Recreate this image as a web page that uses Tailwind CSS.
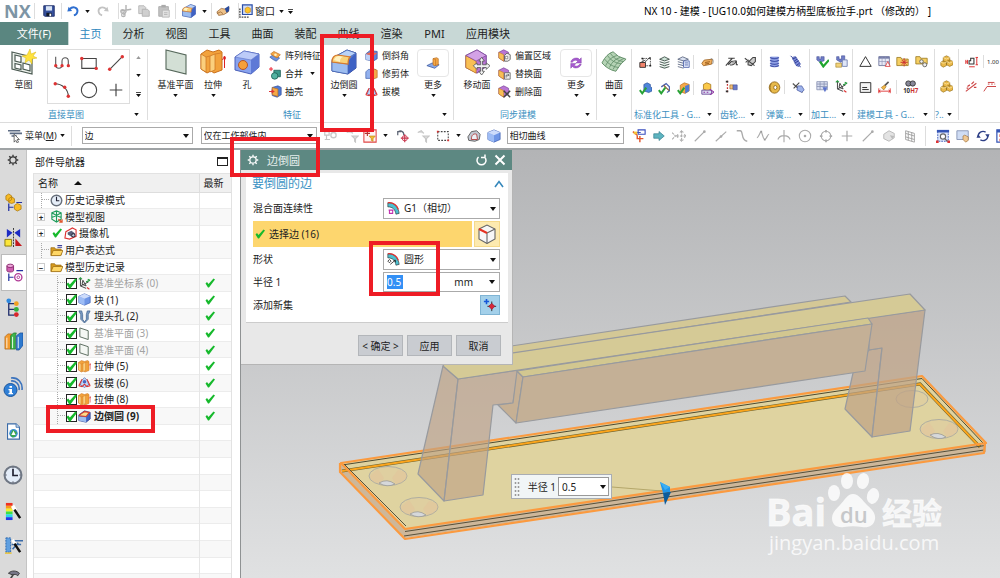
<!DOCTYPE html>
<html lang="zh-CN">

<head>
  <meta charset="UTF-8" />
  <meta name="viewport" content="width=device-width, initial-scale=1" />
  <title>NX 10 - 建模</title>
  <script src="https://cdn.jsdelivr.net/npm/@tailwindcss/browser@4"></script>
</head>

<body class="relative flex h-screen flex-col overflow-hidden bg-white font-['Noto_Sans','Noto_Sans_CJK_SC',sans-serif] text-[10px] leading-none text-[#222]">

  <!-- icon set -->
  <svg class="hidden" xmlns="http://www.w3.org/2000/svg">
    <symbol id="down" viewBox="0 0 6 4"><path d="M0 0h6L3 4z" fill="#111" /></symbol>
    <symbol id="up" viewBox="0 0 6 4"><path d="M0 4h6L3 0z" fill="#999" /></symbol>
    <symbol id="downbar" viewBox="0 0 6 6"><path d="M0 0h6v1H0zM0 2.500h6L3 6z" fill="#111" /></symbol>
    <symbol id="save" viewBox="0 0 16 16"><path d="M2 2h12v12H3l-1-1z" fill="#35509c" stroke="#1c2c66" /><path d="M4.500 2.500h7v5h-7z" fill="#d9e4f5" /><path d="M5 10h6v4H5z" fill="#111827" /><path d="M8.500 11h2v3h-2z" fill="#fff" /></symbol>
    <symbol id="undo" viewBox="0 0 16 16"><path d="M1.500 8.500 3 3l4 5z" fill="#2f6fd0" /><path d="M4 6c4-4 10-2 9 3-.4 2-2 3.500-4 4" fill="none" stroke="#2f6fd0" stroke-width="2.200" /></symbol>
    <symbol id="redo" viewBox="0 0 16 16"><path d="M14.500 8.500 13 3 9 8z" fill="#c3c3c3" /><path d="M12 6C8 2 2 4 3 9c.4 2 2 3.500 4 4" fill="none" stroke="#c3c3c3" stroke-width="2" /></symbol>
    <symbol id="cut" viewBox="0 0 16 16"><path d="M8 1v8M2 8l12-2M8 9l-3 4" fill="none" stroke="#b3b3b3" stroke-width="1.600" /><circle cx="5" cy="12.500" r="2" fill="none" stroke="#b3b3b3" stroke-width="1.400" /><circle cx="4" cy="8.500" r="2" fill="none" stroke="#b3b3b3" stroke-width="1.400" /></symbol>
    <symbol id="copy" viewBox="0 0 16 16"><path d="M2 2h6l2 2v7H2z" fill="#d8d8d8" stroke="#b5b5b5" /><path d="M6 6h6l2 2v6H6z" fill="#cfcfcf" stroke="#b0b0b0" /></symbol>
    <symbol id="paste" viewBox="0 0 16 16"><path d="M2 3h11v11H2z" fill="#c2c2c2" stroke="#aaa" /><path d="M5 1h5v3H5z" fill="#aaa" /><path d="M6 7h8v8H6z" fill="#e2e2e2" stroke="#b5b5b5" /><path d="M8 10h4M8 12h4" stroke="#b5b5b5" /></symbol>
    <symbol id="round" viewBox="0 0 26 26"><path d="M1 13c0-5 3-6 6-7l9-5 9 3v15l-8 6-16-3z" fill="#5b7fd4" stroke="#33489a" stroke-linejoin="round" /><path d="M17 12l8-8v15l-8 6z" fill="#3f62c4" /><path d="M1 13l16 2v10L1 22z" fill="#9dbdf0" stroke="#4465b5" stroke-width=".7" /><path d="M7 6l9-5 9 3-8 5z" fill="#b9d2f8" stroke="#4465b5" stroke-width=".7" /><path d="M1 13c0-5 3-7 6-7l12 2c-2 2-2 4-2 7z" fill="#f9d27a" stroke="#d97a2b" stroke-width="1.200" /><path d="M3 11c1-3 3-4 5-4l5 1c-3 0-4 2-4 5z" fill="#fff2c2" /></symbol>
    <symbol id="t-round" viewBox="0 0 16 16"><path d="M1 6l7-5 7 2v8l-5 4-9-2z" fill="#3f62c4" stroke="#2a3c8c" stroke-width=".9" /><path d="M1 8l9 1v6l-9-2z" fill="#9dbdf0" /><path d="M2 6l6-4 6 1-4 5-8-1z" fill="#fbdc8c" stroke="#dd3a24" stroke-width="1.300" /></symbol>
    <symbol id="hand" viewBox="0 0 16 12"><path d="M1 7l5-4 5 1 4-2-1 5-5 3-6 1z" fill="#efc38b" stroke="#8c5a2a" stroke-width=".8" /><path d="M10 3l5-3v6l-3 2z" fill="#2c4d9c" /><path d="M1 9l4-2 3 2" fill="none" stroke="#8c5a2a" stroke-width=".8" /></symbol>
    <symbol id="window" viewBox="0 0 16 16"><path d="M1 5v10h10" fill="none" stroke="#444" stroke-dasharray="2 1" stroke-width="1.500" /><path d="M4 1h11v11H4z" fill="#cfdcf7" stroke="#2b4fa8" stroke-width="1.400" /><path d="M7 5l3-1.500L13 5v4l-3 1.500L7 9z" fill="#ffc528" stroke="#c98512" stroke-width=".7" /></symbol>

    <symbol id="sketch" viewBox="0 0 26 26"><path d="M1 3l20 5v17L1 20z" fill="#eef3ee" stroke="#4b5a52" stroke-width="1.200" /><path d="M4 6l6 1.500v6L4 12zM4 14.500l6 1.500v4.500L4 19zM12 14l7 2v6l-7-2z" fill="#fff" stroke="#4b5a52" stroke-width="1.200" /><path d="M19 0l1 5 5-2-3 4 4 2-5 1 0 5-3-4-4 3 1-5-4-2 5-1z" fill="#ffe23d" stroke="#d7b414" stroke-width=".5" /></symbol>
    <symbol id="profile" viewBox="0 0 20 20"><path d="M3 3v9c0 5 7 5 7 0V8c0-5 7-5 7 0v5" fill="none" stroke="#555" stroke-width="1.200" /><path d="M3 13h.1M10 13h.1M17 13h.1" stroke="#d33" stroke-width="3.600" stroke-linecap="round" /></symbol>
    <symbol id="rect" viewBox="0 0 20 20"><path d="M2 5h16v11H2z" fill="none" stroke="#444" stroke-width="1.200" /><circle cx="2" cy="5" r="1.900" fill="#d33" /><circle cx="18" cy="16" r="1.900" fill="#d33" /></symbol>
    <symbol id="line" viewBox="0 0 20 20"><path d="M3 17L17 3" stroke="#444" stroke-width="1.200" /><circle cx="3" cy="17" r="1.900" fill="#d33" /><circle cx="17" cy="3" r="1.900" fill="#d33" /></symbol>
    <symbol id="arc" viewBox="0 0 20 20"><path d="M2 3c8 0 15 6 15 14" fill="none" stroke="#444" stroke-width="1.200" /><circle cx="2.500" cy="3" r="1.900" fill="#d33" /><circle cx="13" cy="7" r="1.900" fill="#d33" /><circle cx="17" cy="17" r="1.900" fill="#d33" /></symbol>
    <symbol id="circle" viewBox="0 0 20 20"><circle cx="10" cy="10" r="8.500" fill="none" stroke="#444" stroke-width="1.200" /></symbol>
    <symbol id="plus" viewBox="0 0 20 20"><path d="M10 3v14M3 10h14" stroke="#444" stroke-width="1.300" /></symbol>

    <symbol id="plane" viewBox="0 0 26 26"><path d="M3 1l20 5v19L3 20z" fill="#d3dfd5" stroke="#55675a" stroke-width="1.100" /></symbol>
    <symbol id="extrude" viewBox="0 0 26 26"><path d="M1 5l6-4 6 2 6-2 3 2v18l-8 3-3-2-4 2-6-4z" fill="#f2a23c" stroke="#c9701c" /><path d="M1 5l5 3v15l-5-3zM10 7l5-2v16l-5 2z" fill="#fbcf7d" stroke="#c9701c" stroke-width=".7" /><path d="M6 8l4-1M15 5l6-1" stroke="#d9822b" /><path d="M24.500 19V8M22.500 11l2-4 2 4" fill="none" stroke="#d22" /></symbol>
    <symbol id="hole" viewBox="0 0 26 26"><path d="M1 8l9-6 15 3v13l-8 7-16-4z" fill="#89a3ee" stroke="#4a5fb8" /><path d="M17 11l8-6v13l-8 7z" fill="#5e79d6" /><path d="M1 8l9-6 15 3-8 6z" fill="#bccbf8" stroke="#5a70c4" stroke-width=".6" /><circle cx="9" cy="16" r="4.500" fill="#f6a03a" stroke="#b3562a" /></symbol>
    <symbol id="pattern" viewBox="0 0 16 16"><path d="M1 10l4-3 4 2 4 2-4 4-4-2z" fill="#6d93de" stroke="#31509c" stroke-width=".8" /><path d="M2 6l4-3 4 2 4 2-4 4-4-2z" fill="#f5a847" stroke="#b86b1c" stroke-width=".8" /><circle cx="8" cy="7" r="1.600" fill="#fff2c2" /></symbol>
    <symbol id="unite" viewBox="0 0 16 16"><path d="M6 4h8v8H6z" fill="#3e9a8c" stroke="#1f5f55" /><circle cx="7" cy="11" r="4" fill="#55b3a2" stroke="#1f5f55" /><path d="M2.500 0v5M0 2.500h5" stroke="#e23" stroke-width="1.200" /></symbol>
    <symbol id="shell" viewBox="0 0 16 16"><path d="M4 3l7-2 4 2v9l-5 3-6-2z" fill="#4f7ad3" stroke="#2d4a99" stroke-width=".8" /><path d="M4 3l7 2v9l-7-2z" fill="#f5a847" stroke="#b86b1c" stroke-width=".8" /><path d="M0 8h5M3 6l3 2-3 2" fill="none" stroke="#d33" stroke-width="1.300" /></symbol>
    <symbol id="chamfer" viewBox="0 0 16 16"><path d="M1 6l5-4 9 1v9l-5 3-9-2z" fill="#5f86dd" stroke="#2d4a99" stroke-width=".8" /><path d="M1 6l9 2v7l-9-2z" fill="#bcd0f6" /><path d="M1 6l5-2 9 1-5 4z" fill="#e96a55" /></symbol>
    <symbol id="trim" viewBox="0 0 16 16"><path d="M1 6l3-3h9l-2 3v8H1z" fill="#93b1ee" stroke="#3858a8" stroke-width=".8" /><path d="M10 2l5 2v9l-5 2z" fill="#f5a847" stroke="#b86b1c" stroke-width=".8" /></symbol>
    <symbol id="draft" viewBox="0 0 16 16"><path d="M4 6l4-4 4 4 1 5-5 3-5-3z" fill="#c5d7f8" stroke="#3858a8" stroke-width=".8" /><path d="M1 12l4-8M15 12l-4-8M1 12l4 1 3-3 3 3 4-1" fill="none" stroke="#d33" stroke-width="1.300" /><circle cx="8" cy="7" r="2.200" fill="#4668c0" /></symbol>
    <symbol id="moreblock" viewBox="0 0 16 16"><path d="M1 11l6-3 8 2-5 4z" fill="#8aa9e6" stroke="#31509c" stroke-width=".8" /><path d="M8 3l4-1 2 1v7l-4 1-2-1z" fill="#f5a847" stroke="#b86b1c" stroke-width=".8" /><path d="M8 3l3 1v7" fill="none" stroke="#b86b1c" stroke-width=".7" /></symbol>
    <symbol id="moveface" viewBox="0 0 28 28"><path d="M2 7l12-6 10 6v12l-10 7-12-6z" fill="#b975d4" stroke="#744195" /><path d="M2 7l11 6v13L2 20z" fill="#f8bf55" stroke="#c47a1c" stroke-width=".8" /><path d="M2 7l12-6 10 6-11 6z" fill="#d3a2e6" stroke="#744195" stroke-width=".7" /><path d="M19 9l3 4h-2v4h4v-2l4 3-4 4v-2h-4v4h2l-3 4-3-4h2v-4h-4v2l-4-4 4-3v2h4v-4h-2z" fill="#f2f2f2" stroke="#555" stroke-width=".9" /></symbol>
    <symbol id="face" viewBox="0 0 16 16"><path d="M1 4l6-3 6 3v7l-6 4-6-4z" fill="#b975d4" stroke="#744195" stroke-width=".8" /><path d="M1 4l6 3v8l-6-4z" fill="#f8bf55" stroke="#c47a1c" stroke-width=".7" /></symbol>
    <symbol id="offset" viewBox="0 0 16 16"><use href="#face" /><path d="M8 8l3-3 4 2v6l-3 2H8z" fill="#eee" stroke="#555" /><path d="M9 9h3v3H9z" fill="#fff" stroke="#555" stroke-width=".7" /></symbol>
    <symbol id="replace" viewBox="0 0 16 16"><use href="#face" /><path d="M8 7h7v8H8z" fill="#eee" stroke="#666" /><path d="M10 13v-3h3M12 8.500l1.500 1.500-1.500 1.500" fill="none" stroke="#555" /></symbol>
    <symbol id="delface" viewBox="0 0 16 16"><use href="#face" /><path d="M7 7l8 8M15 7l-8 8" stroke="#444" stroke-width="1.800" /></symbol>
    <symbol id="sync" viewBox="0 0 16 16"><path d="M2 7c1-5 8-6 10-3l2-2v6H8l2-2c-2-2-5-1-6 1zM14 9c-1 5-8 6-10 3l-2 2V8.500h6L6 10.500c2 2 5 1 6-1z" fill="#a85bd0" stroke="#7b3ba3" stroke-width=".5" /></symbol>
    <symbol id="surface" viewBox="0 0 28 26"><path d="M1 14Q6 4 13 2q5 6 14 8-6 4-11 13Q7 21 1 14z" fill="#b5d3b5" stroke="#5f8d66" /><path d="M4 10q6 8 15 9M7 6q5 8 15 9M10 3.500q5 8 14 9M5 17Q9 8 17 6M9 19q4-9 12-11M13 21q4-9 12-12" fill="none" stroke="#5a8862" stroke-width=".8" /></symbol>

    <symbol id="g1" viewBox="0 0 16 16"><path d="M5 3h9v9H5z" fill="none" stroke="#333" stroke-dasharray="2 1" /><path d="M2 8l6-3M3 12l9-9" stroke="#333" /><path d="M12.500 1.500h2v2h-2zM3 2h2v2H3zM13 11h2v2h-2z" fill="#222" /><path d="M1 8h7v6H1z" fill="#f2836b" stroke="#222" /></symbol>
    <symbol id="g2" viewBox="0 0 16 16"><path d="M2 4l6-3 6 3-6 2zM2 7l6 2 6-2M2 10l6 2 6-2M2 13l6 2 6-2" fill="#cfe4d8" stroke="#3f4f48" stroke-width="1.100" /></symbol>
    <symbol id="g3" viewBox="0 0 16 16"><path d="M1 4l6-3 7 3-6 2zM1 7l7 2 6-2M1 10l7 2 6-2M1 13l7 2" fill="#dbe2f2" stroke="#55607a" /><path d="M8 6h7v8H8z" fill="#e6ecfb" stroke="#4a5fa8" /><path d="M9.500 8.500h4M9.500 11h4" stroke="#4a5fa8" /></symbol>
    <symbol id="g4" viewBox="0 0 16 16"><path d="M1 9l3-4 10-1-1 6-10 2z" fill="#f0b060" stroke="#9a6020" /><path d="M5 8l6-1M5 10l5-1" stroke="#8a4d10" /><path d="M12 3c3 0 4 4 2 7" fill="none" stroke="#888" /></symbol>
    <symbol id="bluecheck" viewBox="0 0 16 16"><path d="M6 3l4-2 4 2v3l2 1v4l-4 2-6-2z" fill="#4f86da" stroke="#264b98" stroke-width=".8" /><path d="M1 10l3 4 5-7" fill="none" stroke="#28a235" stroke-width="2.400" /></symbol>
    <symbol id="edgecheck" viewBox="0 0 16 16"><path d="M4 6l6-4 4 4v5l-3 2" fill="none" stroke="#4d62b0" stroke-width="1.500" /><path d="M8 5l6 6M7 4l3 3" stroke="#8a6030" stroke-width="1.500" /><path d="M1 10l3 4 5-7" fill="none" stroke="#28a235" stroke-width="2.400" /></symbol>
    <symbol id="blockcheck" viewBox="0 0 16 16"><path d="M4 4l5-3 6 2v8l-5 3-6-2z" fill="#f5a847" stroke="#b86b1c" stroke-width=".8" /><path d="M10 5l5-2v8l-5 3z" fill="#4f7ad3" /><path d="M1 10l3 4 5-7" fill="none" stroke="#28a235" stroke-width="2.400" /></symbol>
    <symbol id="g8" viewBox="0 0 16 16"><path d="M3 3l4-2 5 2v6l-4 2-5-2z" fill="#fbc94a" stroke="#a9791a" /><path d="M1 10h12v5H1z" fill="#dcdcf2" stroke="#5f3f8f" /><path d="M3 12.500h2M7 12.500h2M11 9l5 3.500-5 3" stroke="#8c2fa0" fill="none" stroke-width="1.300" /></symbol>
    <symbol id="gear1" viewBox="0 0 16 14"><path d="M4 3h8M1 12L9 3M4 11l4-4 6-1M6 11c3 1 6-1 8-5v5h2" fill="none" stroke="#444" stroke-width="1.400" /><path d="M7 9l3-2 3 0-2 3z" fill="#aaa" /></symbol>
    <symbol id="gear2" viewBox="0 0 16 14"><path d="M1 3l12 9M5 8l6-6h3v5l-5 5-4-1zM2 8l4-3" fill="#ccc" stroke="#444" stroke-width="1.300" /></symbol>
    <symbol id="gear3" viewBox="0 0 16 16"><path d="M3 1v14" stroke="#c33" stroke-dasharray="2 2" stroke-width="1.500" /><path d="M6 6h4v5H6z" fill="#f1c27a" stroke="#9a6020" stroke-width=".7" /><path d="M10 6h5v6h-5z" fill="#6c7bc9" stroke="#3a4a99" stroke-width=".7" /><path d="M1 1h3v2H1zM1 13h3v2H1z" fill="#333" /></symbol>
    <symbol id="spring1" viewBox="0 0 16 16"><path d="M3 2h10v12H3z" fill="#8fa0e4" /><path d="M2.500 3c3 2 8 2 11 0M2.500 6.500c3 2 8 2 11 0M2.500 10c3 2 8 2 11 0M2.500 13c3 2 8 2 11 0" fill="none" stroke="#4757ae" stroke-width="1.400" /></symbol>
    <symbol id="spring2" viewBox="0 0 16 16"><path d="M4 3l4-1 6 9-2 3-3-1z" fill="#7f8edb" stroke="#4757ae" /><path d="M4 5l5-2M6 8l4-3M7 10l5-3M9 13l4-3M2 1l2 2M13 13l1 2" stroke="#303f96" stroke-width="1.200" /></symbol>
    <symbol id="spring3" viewBox="0 0 16 16"><ellipse cx="8" cy="8" rx="6.500" ry="7" fill="#e7b94a" stroke="#8c6418" /><ellipse cx="9" cy="8" rx="2" ry="2.500" fill="#fff" stroke="#8c6418" /><path d="M4 3c-2 3-2 7 0 10" fill="none" stroke="#8c6418" /></symbol>
    <symbol id="spring4" viewBox="0 0 16 16"><path d="M1 3l12 11" stroke="#555" stroke-width="1.600" /><path d="M7 6l5 0 3 5-3 3-6-3z" fill="#9fb4ea" stroke="#3a4a99" stroke-width=".8" /><path d="M2 9l7-7" stroke="#444" stroke-width="1.300" /></symbol>
    <symbol id="mill1" viewBox="0 0 16 16"><path d="M1 2h3v3h2V2h4v5l-5 2-4-3z" fill="#6f7cc8" stroke="#444f94" stroke-width=".7" /><path d="M5 8l4 6 7-8" fill="none" stroke="#1fa52e" stroke-width="2.800" /></symbol>
    <symbol id="mill2" viewBox="0 0 16 16"><path d="M2 2h3v3h3V1h4v5l-5 3-5-3z" fill="#6f7cc8" stroke="#444f94" stroke-width=".7" /><path d="M1 10h7v5H1z" fill="#f2d27a" stroke="#9a7a20" stroke-width=".7" /><path d="M9 6h6v8H9z" fill="#dfe6f8" stroke="#6876aa" /></symbol>
    <symbol id="grid" viewBox="0 0 16 16"><path d="M1 2h13v10H1z" fill="#d8deef" stroke="#8a94b4" /><path d="M1 5h13M1 8h13M5 2v10M10 2v10" stroke="#8a94b4" /><path d="M8 9h6l-3 6z" fill="#5c74cc" /></symbol>
    <symbol id="axes" viewBox="0 0 16 16"><path d="M3 2v9l7 3M3 11l10-5M6 4l4 7-5-2z" fill="none" stroke="#444" stroke-width="1.200" /><path d="M10 6l5-2M15 4l-3-1" stroke="#2a9c42" stroke-width="1.500" /><path d="M11 13l3 2" stroke="#d33" stroke-width="1.500" /><path d="M1 3l2-2 2 2" fill="none" stroke="#2a9c42" stroke-width="1.300" /></symbol>
    <symbol id="tri" viewBox="0 0 16 16"><path d="M8 2l7 12H1z" fill="none" stroke="#333" stroke-width="1.200" /></symbol>
    <symbol id="sheet" viewBox="0 0 16 16"><path d="M1 2h13v11H1z" fill="#e8eaf6" stroke="#656c94" /><path d="M1 2h13v2.500H1z" fill="#767da8" /><path d="M5 2v11M9 2v11M1 8h13" stroke="#8f96b8" stroke-width=".8" /><path d="M12 8l3 6h-6z" fill="#fff" stroke="#d33" /></symbol>
    <symbol id="folderstar" viewBox="0 0 16 16"><path d="M1 3h5l1 2h8v8H1z" fill="#f6cf62" stroke="#9a7a20" /><path d="M10 4v10M5.500 9h9M7 6l6 6M13 6l-6 6" stroke="#c33" stroke-width="1.200" /></symbol>
    <symbol id="foldergear" viewBox="0 0 16 16"><path d="M1 2h5l1 2h8v7H1z" fill="#f6cf62" stroke="#9a7a20" /><circle cx="8" cy="8" r="2.200" fill="#eee" stroke="#555" /><circle cx="12" cy="12" r="2.500" fill="#eee" stroke="#555" /></symbol>
    <symbol id="note" viewBox="0 0 16 16"><path d="M1.500 2h13v12h-13z" fill="#f4f4f4" stroke="#333" stroke-width="1.200" /><path d="M4 8h6M4 10.500h8" stroke="#333" stroke-width="1.200" /></symbol>
    <symbol id="brush" viewBox="0 0 16 16"><path d="M13 1l-5 5" stroke="#555" stroke-width="2" /><path d="M4 8l4-3 2 2-3 4z" fill="#f2b84a" stroke="#9a6a20" stroke-width=".7" /><path d="M1 9v6M15 9v6M1 12.500h14M3 11l-2 1.500L3 14M13 11l2 1.500L13 14" fill="none" stroke="#d33" stroke-width="1.100" /></symbol>
    <symbol id="cubes" viewBox="0 0 16 16"><path d="M4 3l4-2 4 2v5l-4 2-4-2zM1 9l3-2 4 2v4l-4 2-3-2zM8 8l4-2 4 2v4l-4 2-4-2z" fill="#eab949" stroke="#95701c" stroke-width=".8" /><path d="M4 3l4 2 4-2M1 9l3 1 4-1M8 8l4 2 4-2" fill="none" stroke="#fbe3a0" /></symbol>
    <symbol id="dim" viewBox="0 0 16 16"><path d="M5 11V7h2V4h4v7z" fill="none" stroke="#333" stroke-width="1.300" /><path d="M1 6v5M3 6v5M1 8.500h2M13 3h3M13 12h3M14.500 3v9M5 14.500h7" stroke="#d33" fill="none" stroke-width="1.200" /></symbol>
    <symbol id="dim2" viewBox="0 0 16 16"><path d="M1 14L14 4" stroke="#c44" stroke-width="1.300" /><path d="M3 8l3-2M8 5l3-3M2 10h2M11 9h3" stroke="#c44" stroke-width="1.500" /></symbol>
    <symbol id="dim3" viewBox="0 0 16 16"><path d="M1 14l4-6h11M6 5h2M10 5h2M14 5h1M6 3h8" fill="none" stroke="#c44" stroke-width="1.200" /></symbol>

    <symbol id="menu" viewBox="0 0 16 16"><path d="M0 2h14M2 5h14M4 8h6" stroke="#5d6c84" stroke-width="1.800" /><path d="M7 6v9l2-2 1.500 3 1.500-1-1.500-3H13z" fill="#fff" stroke="#333" stroke-width=".8" /></symbol>
    <symbol id="graysel" viewBox="0 0 16 16"><path d="M2 3h5v4H2zM4 7v5h4M2 12h5" fill="none" stroke="#c4c4c4" stroke-width="1.300" /><circle cx="12" cy="7" r="3" fill="none" stroke="#c9c9c9" stroke-width="1.500" /></symbol>
    <symbol id="grayfilter" viewBox="0 0 16 16"><path d="M2 4l4-2 3 3M8 8h7l-3 3v4l-1-1v-3z" fill="#ddd" stroke="#c6c6c6" stroke-width="1.300" /></symbol>
    <symbol id="pick" viewBox="0 0 16 16"><path d="M1 1h14v14H1z" fill="#fff4f2" stroke="#e04545" stroke-width="1.200" /><path d="M5 2v6M2 5h6" stroke="#b5332e" stroke-width="1.300" /><path d="M7 8h7l-2.500 3v3l-2-1v-2z" fill="#f5bc30" stroke="#b98515" stroke-width=".7" /></symbol>
    <symbol id="rotpick" viewBox="0 0 16 16"><path d="M2 7V3h4M2 4c2-3 7-2 7 3" fill="none" stroke="#5a6272" stroke-width="1.400" /><path d="M10 6v9M5.500 10.500h9" stroke="#c8324a" stroke-width="1.300" /><circle cx="10" cy="10.500" r="3" fill="none" stroke="#c8324a" /></symbol>
    <symbol id="dashrect" viewBox="0 0 16 16"><path d="M2 3h12v10H2z" fill="none" stroke="#444" stroke-dasharray="2 1.500" stroke-width="1.200" /><path d="M1 2h2v2H1zM13 12h2v2h-2z" fill="#d33" /></symbol>
    <symbol id="disc" viewBox="0 0 16 14"><path d="M1 8l4-6 6-1 4 4-1 6-5 2-7-1z" fill="#c3c9d3" stroke="#555" /><path d="M5 11c0-6 3-7 6-6l1 6z" fill="#eceff4" stroke="#b03a3a" /></symbol>
    <symbol id="cube" viewBox="0 0 16 16"><path d="M1 4l7-3 7 3v8l-7 3-7-3z" fill="#6f96e6" stroke="#3b5cb0" stroke-width=".8" /><path d="M1 4l7 3v8l-7-3z" fill="#9dbcf5" /><path d="M1 4l7-3 7 3-7 3z" fill="#cddcfb" /></symbol>
    <symbol id="crosspts" viewBox="0 0 16 16"><path d="M2 4h8M7 1h8v5H7z" fill="#fff" stroke="#3a4fc0" stroke-width="1.300" /><path d="M1 3l5 4M6 7v4h7M9 8v7" fill="none" stroke="#e0542a" stroke-width="1.600" /><path d="M2 3h4v3H2z" fill="#f7c034" /></symbol>
    <symbol id="arrowr" viewBox="0 0 16 14"><path d="M1 4h7V1l7 6-7 6v-3H1z" fill="#5db4c0" stroke="#2f7c8c" stroke-width=".9" /></symbol>
    <symbol id="s1" viewBox="0 0 16 16"><path d="M11 2v12M5 8h11M9 4l2-2 2 2M9 12l2 2 2-2M7 6L5 8l2 2M14 6l2 2-2 2M0 4l4 4-4 4" fill="none" stroke="#ababab" stroke-width="1.200" stroke-dasharray="3 1" /></symbol>
    <symbol id="s2" viewBox="0 0 16 16"><path d="M2 14L13 3" stroke="#aaa" stroke-width="1.300" /><circle cx="13" cy="3" r="1.500" fill="#aaa" /></symbol>
    <symbol id="s3" viewBox="0 0 16 16"><path d="M2 14L14 3" stroke="#aaa" stroke-width="1.300" /><circle cx="8" cy="8.500" r="1.500" fill="#aaa" /></symbol>
    <symbol id="s4" viewBox="0 0 16 16"><path d="M2 2h4c4 0 0 11 8 12" fill="none" stroke="#aaa" stroke-width="1.500" /></symbol>
    <symbol id="s5" viewBox="0 0 16 16"><path d="M1 10c2 0 4-8 5-7s2 9 4 9 3-6 5-6" fill="none" stroke="#aaa" stroke-width="1.300" /><path d="M5 2h2v2H5zM9 11h2v2H9z" fill="#999" /></symbol>
    <symbol id="s6" viewBox="0 0 16 16"><path d="M1 12c2-6 12-6 14 0M8 1v14" fill="none" stroke="#aaa" stroke-width="1.300" /></symbol>
    <symbol id="s7" viewBox="0 0 16 16"><circle cx="8" cy="8" r="6.500" fill="none" stroke="#aaa" stroke-width="1.200" /><circle cx="8" cy="8" r="1.500" fill="#aaa" /></symbol>
    <symbol id="s8" viewBox="0 0 16 16"><circle cx="8" cy="8" r="5.500" fill="none" stroke="#aaa" stroke-width="1.200" /><path d="M8 1v3M8 12v3M1 8h3M12 8h3" stroke="#aaa" stroke-width="2" /></symbol>
    <symbol id="s9" viewBox="0 0 16 16"><path d="M8 2v12M2 8h12" stroke="#aaa" stroke-width="1.400" /></symbol>
    <symbol id="s11" viewBox="0 0 16 16"><path d="M2 6l6-4 6 3v5l-6 4-6-3z" fill="#e3e3e3" stroke="#b5b5b5" /><path d="M9 7l5 1-2 4z" fill="#bbb" /></symbol>
    <symbol id="s12" viewBox="0 0 16 16"><path d="M3 2l10 3v10L3 12zM3 5l10 3M3 9l10 3M6 3v10M10 4v10" fill="none" stroke="#9d9d9d" /></symbol>
    <symbol id="fit" viewBox="0 0 16 16"><path d="M2 2h12v12H2z" fill="#dfe7fb" stroke="#3554b5" stroke-dasharray="2 1" /><path d="M1 1h14v3H1z" fill="#3554b5" /><circle cx="8" cy="8.500" r="3" fill="#fff" stroke="#666" stroke-width="1.300" /><path d="M10 11l3 3" stroke="#666" stroke-width="1.500" /><path d="M0 13h3v3H0zM13 13h3v3h-3z" fill="#d33" /></symbol>
    <symbol id="pan" viewBox="0 0 16 16"><path d="M1 2h13v10H1z" fill="#cfdcf4" stroke="#8592b5" /><path d="M8 8l2-1 4 2v4l-3 2-3-3z" fill="#efc793" stroke="#9a6a30" stroke-width=".7" /></symbol>
    <symbol id="rot" viewBox="0 0 16 16"><path d="M2.500 9C2 4 7 1.500 11 3.500M13.500 7c.5 5-4.500 7.500-8.500 5.500" fill="none" stroke="#2d3f86" stroke-width="1.600" /><path d="M15.500 6h-5l3 4zM.5 10h5l-3-4z" fill="#2d3f86" /></symbol>
    <symbol id="layout" viewBox="0 0 16 16"><path d="M1 1h14v14H1z" fill="#fff" stroke="#3554b5" stroke-width="1.400" /><path d="M1 1h14v3H1z" fill="#3554b5" /><path d="M4 6h3v3H4zM4 11h3v3H4z" fill="#e23b2a" /></symbol>

    <symbol id="cog" viewBox="0 0 16 16"><circle cx="8" cy="8" r="4.200" fill="none" stroke="currentColor" stroke-width="1.600" /><path d="M8 1v2.500M8 12.500V15M1 8h2.500M12.500 8H15M3 3l1.800 1.800M11.200 11.200L13 13M13 3l-1.800 1.800M4.800 11.200L3 13" stroke="currentColor" stroke-width="1.800" /></symbol>
    <symbol id="n1" viewBox="0 0 20 20"><path d="M2 3l3-2 3 2v4l-3 2-3-2zM5 6l3-2 3 2v4l-3 1-3-1zM11 13l3-2 4 2v4l-4 2-3-2z" fill="#f8bb25" stroke="#ad7b10" stroke-width=".8" /><path d="M5 11v8M5 15h5M13 10h6" stroke="#2331a0" stroke-width="1.300" /></symbol>
    <symbol id="n2" viewBox="0 0 20 20"><path d="M3 1l6 4-6 5zM17 1l-6 4 6 5z" fill="#1c2bc4" /><path d="M10 0v20" stroke="#333" stroke-dasharray="2 1" /><path d="M1 12h7v7H1z" fill="#fce63a" stroke="#8a7a10" /><path d="M12 11l7 8h-7z" fill="#c4181c" /></symbol>
    <symbol id="n3" viewBox="0 0 20 20"><path d="M2 3v5c0 2 7 2 7 0V3" fill="#cf5fb0" stroke="#8a2a70" /><ellipse cx="5.500" cy="3" rx="3.500" ry="1.800" fill="#eda5d8" stroke="#8a2a70" /><path d="M4 11v8M4 15h5M12 8h7" stroke="#2331a0" stroke-width="1.300" /><circle cx="14" cy="15" r="3.800" fill="#fff" stroke="#b03a96" stroke-width="1.400" /><circle cx="14" cy="15" r="1.400" fill="#fff" stroke="#b03a96" /></symbol>
    <symbol id="n4" viewBox="0 0 20 20"><path d="M5 4v14h6M5 6h6M5 12h6" fill="none" stroke="#23306e" stroke-width="1.400" /><circle cx="5" cy="3" r="2.500" fill="#2f8ae0" /><circle cx="13" cy="6" r="2.500" fill="#f0a020" /><circle cx="13" cy="12" r="2.600" fill="#32b03c" /><circle cx="13" cy="17.400" r="2.500" fill="#d8262a" /></symbol>
    <symbol id="n5" viewBox="0 0 20 20"><path d="M1 5l3-3h4l-1 3v13H1z" fill="#f39a2c" stroke="#a9601a" stroke-width=".7" /><path d="M7 4l3-3h3l-1 3v14H7z" fill="#3cb54a" stroke="#1c7428" stroke-width=".7" /><path d="M13 4l4-3h3v13l-4 5h-3z" fill="#2d79cf" stroke="#1a4890" stroke-width=".7" /><path d="M3 6v11M9 5v12M15 5v12" stroke="#fff" stroke-width=".9" /></symbol>
    <symbol id="n6" viewBox="0 0 20 20"><circle cx="7.500" cy="13" r="6.500" fill="#2f7fd6" stroke="#1b559c" /><path d="M6.500 9h2.500v1.800H6.500zM5.500 12H9v4h1v1.200H5.500V16h1v-2.800h-1z" fill="#fff" /><path d="M8 4c5-1 9 4 8 9M8 1c7-1 12 5 11 12" fill="none" stroke="#3b73bd" stroke-width="1.600" /></symbol>
    <symbol id="n7" viewBox="0 0 20 20"><path d="M3 1h10l4 4v14H3z" fill="#fff" stroke="#3a6ba8" stroke-width="1.300" /><path d="M13 1v4h4" fill="#c7daf0" stroke="#3a6ba8" /><circle cx="10" cy="12" r="5" fill="#3a8fd6" /><path d="M6 14l3-6 5 3-2 5-3 1z" fill="#3aa84a" /><path d="M10 9l2.500 5h-5z" fill="#fff" /></symbol>
    <symbol id="n8" viewBox="0 0 20 20"><circle cx="10" cy="10" r="8.500" fill="#e3ecf8" stroke="#6e7683" stroke-width="2" /><path d="M10 4v6.500h5" fill="none" stroke="#223" stroke-width="1.700" /><path d="M10 2.500v1M10 16.500v1M2.500 10h1M16.500 10h1" stroke="#223" /></symbol>
    <symbol id="n9" viewBox="0 0 20 20"><path d="M2 1h7v3H2z" fill="#f03020" /><path d="M2 4h7v3H2z" fill="#fa9a1c" /><path d="M2 7h7v3H2z" fill="#f3f02a" /><path d="M2 10h7v3H2z" fill="#3fe043" /><path d="M2 13h7v3H2z" fill="#28d8e8" /><path d="M2 16h7v3H2z" fill="#2038e8" /><path d="M9 4l3 5" stroke="#fff" stroke-width="4" /><path d="M11 8l6 9" stroke="#111" stroke-width="2.600" /></symbol>
    <symbol id="n10" viewBox="0 0 20 20"><path d="M2 2h5v15H2z" fill="#5f9fe0" stroke="#2c66ad" stroke-dasharray="2 1" /><path d="M10 5h10M8 9h10M9 14l6-7" stroke="#3a6ba8" stroke-width="1.600" /><path d="M9 4l3 5" stroke="#fff" stroke-width="3" /><path d="M11 8l6 9" stroke="#111" stroke-width="2.600" /><path d="M1 18h7" stroke="#e8c030" stroke-width="1.500" /></symbol>
    <symbol id="n11" viewBox="0 0 20 20"><path d="M4 5c4-4 10-3 13 0l-2 3c-2-2-4-2-6-1z" fill="#778" stroke="#333" /><path d="M10 6L3 17" stroke="#444" stroke-width="2" /></symbol>

    <symbol id="t-clock" viewBox="0 0 14 14"><circle cx="7" cy="7" r="5.700" fill="#e6eef8" stroke="#68707c" stroke-width="1.500" /><path d="M7 3v4.300h3" fill="none" stroke="#223" stroke-width="1.200" /></symbol>
    <symbol id="t-view" viewBox="0 0 14 14"><path d="M2 3l5-2 5 2v7l-5 3-5-3zM2 3l5 3 5-3M7 1v12M2 8l5-2 5 2" fill="none" stroke="#1f9c5c" stroke-width="1.200" /><path d="M9 10l4 3M13 10v3h-3" fill="none" stroke="#e0542a" stroke-width="1.300" /></symbol>
    <symbol id="t-cam" viewBox="0 0 14 14"><path d="M2 5l7-4 4 2v7l-7 3-5-1z" fill="#fff" stroke="#d33" stroke-width="1.200" /><path d="M4 6l4-2 4 3v3l-3 1-5-3z" fill="#59607a" /><circle cx="10" cy="9" r="1.800" fill="#bcd" stroke="#223" /></symbol>
    <symbol id="t-folder" viewBox="0 0 14 14"><path d="M1 4h4l1 1.500h6V12H1z" fill="#d69a1e" stroke="#9a6a10" stroke-width=".8" /><path d="M3.500 7H14l-2.500 5.500H1z" fill="#ffd766" stroke="#9a6a10" stroke-width=".8" /></symbol>
    <symbol id="t-expr" viewBox="0 0 14 14"><use href="#t-folder" /><path d="M8 1.500h5M8 3.500h5" stroke="#3a3f9c" stroke-width="1.100" /></symbol>
    <symbol id="t-plane" viewBox="0 0 14 14"><path d="M2 1l9 3v9.500L2 10.500z" fill="#f4f7f4" stroke="#55675a" /></symbol>
    <symbol id="t-sink" viewBox="0 0 14 14"><path d="M1 1h3l1 4v5l2 3 2-3V5l1-4h3l-2 4v5l-4 4-4-4V5z" fill="#7f9fc6" stroke="#40618c" stroke-width=".8" /></symbol>
    <symbol id="tick" viewBox="0 0 10 10"><path d="M.5 5.500L2 4l1.500 2L8.500.500 10 1.500 4 9.500H3z" fill="#16b92c" /></symbol>
    <symbol id="g1blend" viewBox="0 0 16 16"><path d="M1 1c7-1 13 5 14 13l-4 1C10 9 7 6 1 6z" fill="#4ec0d0" stroke="#222" stroke-width=".7" /><path d="M1 1c7-1 12 4 13 8" fill="none" stroke="#e03030" stroke-width="1.600" /><path d="M2 10h6M3 10v4h4v-4" fill="none" stroke="#c030b0" stroke-width="1.300" /></symbol>
    <symbol id="circblend" viewBox="0 0 16 16"><path d="M1 1c7-1 13 5 14 13l-4 1C10 9 7 6 1 6z" fill="#4ec0d0" stroke="#222" stroke-width=".7" /><path d="M1 1c7-1 12 4 13 8" fill="none" stroke="#e03030" stroke-width="1.600" /><path d="M1 10l2-2 2 2-2 2zM4 14l6-5M8 9h2.500v2.500" fill="none" stroke="#222" /></symbol>
    <symbol id="edgecube" viewBox="0 0 20 20"><path d="M2 5l8-4 8 4v10l-8 4.500L2 15z" fill="#f7f7f7" stroke="#666" stroke-width="1.100" /><path d="M10 9v10.500M10 9l8-4" stroke="#666" stroke-width="1.100" /><path d="M2 5l8 4" stroke="#e53020" stroke-width="2" /></symbol>
    <symbol id="addset" viewBox="0 0 16 16"><path d="M4 1v6M1 4h6" stroke="#1457d8" stroke-width="1.800" /><path d="M10 4v11M5 9.500h10" stroke="#222" /><path d="M10 6l3.500 3.500L10 13 6.500 9.500z" fill="#d8263a" stroke="#8c1020" stroke-width=".6" /></symbol>
  </svg>

  <!-- title bar -->
  <header class="flex h-[22px] shrink-0 items-center pr-[69px] pl-1">
    <span class="w-[30px] font-['Open_Sans'] text-lg leading-none font-bold text-[#7d95a5]">NX</span>
    <span class="h-4 w-px bg-[#ddd]"></span>
    <button class="ml-[7px] size-[14px]" aria-label="保存"><svg class="size-[14px]"><use href="#save" /></svg></button>
    <span class="ml-[5px] h-4 w-px bg-[#ddd]"></span>
    <button class="ml-1 size-[14px]" aria-label="撤消"><svg class="size-[14px]"><use href="#undo" /></svg></button>
    <svg class="ml-[5px] h-[3px] w-[5px]"><use href="#down" /></svg>
    <button class="ml-1.5 size-[14px]" aria-label="重做"><svg class="size-[14px]"><use href="#redo" /></svg></button>
    <span class="ml-2 h-4 w-px bg-[#ddd]"></span>
    <button class="size-[14px]" aria-label="剪切"><svg class="size-[14px]"><use href="#cut" /></svg></button>
    <button class="ml-1 size-[14px]" aria-label="复制"><svg class="size-[14px]"><use href="#copy" /></svg></button>
    <button class="ml-1.5 size-[14px]" aria-label="粘贴"><svg class="size-[14px]"><use href="#paste" /></svg></button>
    <span class="ml-1 h-4 w-px bg-[#ddd]"></span>
    <button class="ml-1.5 size-[14px]" aria-label="特征"><svg class="size-[14px]"><use href="#round" /></svg></button>
    <svg class="ml-1.5 h-[3px] w-[5px]"><use href="#down" /></svg>
    <span class="ml-1 h-4 w-px bg-[#ddd]"></span>
    <button class="ml-1 size-[14px]" aria-label="触控"><svg class="size-[14px]"><use href="#hand" /></svg></button>
    <span class="ml-2 h-4 w-px bg-[#ddd]"></span>
    <button class="flex items-center gap-0.5"><svg class="size-[14px]"><use href="#window" /></svg>窗口</button>
    <svg class="ml-1 h-[3px] w-[5px]"><use href="#down" /></svg>
    <svg class="ml-1 h-[5px] w-[5px]"><use href="#downbar" /></svg>
    <h1 class="ml-auto text-[10px] whitespace-nowrap text-black">NX 10 - 建模 - [UG10.0如何建模方柄型底板拉手.prt （修改的） ]</h1>
  </header>

  <!-- ribbon tabs -->
  <nav class="flex h-[23px] shrink-0 items-stretch bg-[#c8d8d6] text-[11px] text-[#222] [&>button]:w-[43px]">
    <button class="mr-px w-[68px]! bg-[#5a8680] text-white">文件(F)</button>
    <button class="bg-white text-[#2d87bd]">主页</button>
    <button>分析</button>
    <button>视图</button>
    <button>工具</button>
    <button>曲面</button>
    <button>装配</button>
    <button>曲线</button>
    <button>渲染</button>
    <button>PMI</button>
    <button class="w-[64px]!">应用模块</button>
  </nav>

  <!-- ribbon -->
  <section class="flex h-[78px] shrink-0 overflow-hidden border-b border-[#dcdcdc] pt-1 pb-0.5 text-[9px] [&>div]:flex [&>div]:shrink-0 [&>div]:flex-col [&>div]:justify-between [&>div]:border-r [&>div]:border-[#dedede]">
    <div class="w-[148px]">
      <div class="flex">
        <button class="flex w-[47px] flex-col items-center gap-[5px]"><svg class="size-[26px]"><use href="#sketch" /></svg>草图</button>
        <div class="grid h-[55px] w-[83px] grid-cols-3 place-items-center border border-[#ddd]">
          <button aria-label="轮廓"><svg class="size-[18px]"><use href="#profile" /></svg></button>
          <button aria-label="矩形"><svg class="size-[18px]"><use href="#rect" /></svg></button>
          <button aria-label="直线"><svg class="size-[18px]"><use href="#line" /></svg></button>
          <button aria-label="圆弧"><svg class="size-[18px]"><use href="#arc" /></svg></button>
          <button aria-label="圆"><svg class="size-[18px]"><use href="#circle" /></svg></button>
          <button aria-label="点"><svg class="size-[18px]"><use href="#plus" /></svg></button>
        </div>
        <div class="flex flex-1 flex-col items-center justify-around">
          <svg class="h-[3px] w-[5px]"><use href="#up" /></svg>
          <svg class="h-[3px] w-[5px]"><use href="#down" /></svg>
          <svg class="h-[5px] w-[5px]"><use href="#downbar" /></svg>
        </div>
      </div>
      <div class="flex h-3 items-center justify-between pr-2 pl-12 text-[#3c8fbf]">直接草图<svg class="h-[3px] w-[5px]"><use href="#down" /></svg></div>
    </div>

    <div class="w-[306px]">
      <div class="flex pl-1.5 [&>button]:flex [&>button]:flex-col [&>button]:items-center [&>button]:gap-[5px]">
        <button class="w-[43px]"><svg class="size-[26px]"><use href="#plane" /></svg>基准平面<svg class="h-[3px] w-[5px]"><use href="#down" /></svg></button>
        <button class="w-8"><svg class="size-[26px]"><use href="#extrude" /></svg>拉伸<svg class="h-[3px] w-[5px]"><use href="#down" /></svg></button>
        <button class="ml-0.5 w-8"><svg class="size-[26px]"><use href="#hole" /></svg>孔</button>
        <ul class="ml-1.5 flex w-14 flex-col gap-[5px] [&_button]:flex [&_button]:items-center [&_button]:gap-[3px] [&_button]:whitespace-nowrap">
          <li><button><svg class="size-[13px]"><use href="#pattern" /></svg>阵列特征</button></li>
          <li><button><svg class="size-[13px]"><use href="#unite" /></svg>合并<svg class="ml-1 h-[3px] w-[5px]"><use href="#down" /></svg></button></li>
          <li><button><svg class="size-[13px]"><use href="#shell" /></svg>抽壳</button></li>
        </ul>
        <button class="w-[38px]"><svg class="size-[26px]"><use href="#round" /></svg>边倒圆<svg class="h-[3px] w-[5px]"><use href="#down" /></svg></button>
        <ul class="ml-0.5 flex w-[52px] flex-col gap-[5px] [&_button]:flex [&_button]:items-center [&_button]:gap-1 [&_button]:whitespace-nowrap">
          <li><button><svg class="size-[13px]"><use href="#chamfer" /></svg>倒斜角</button></li>
          <li><button><svg class="size-[13px]"><use href="#trim" /></svg>修剪体</button></li>
          <li><button><svg class="size-[13px]"><use href="#draft" /></svg>拔模</button></li>
        </ul>
        <button class="w-8"><span class="-mb-1 grid h-7 w-8 place-items-center rounded border border-[#e6e6e6]"><svg class="size-[14px]"><use href="#moreblock" /></svg></span><span class="pt-0.5">更多</span><svg class="h-[3px] w-[5px]"><use href="#down" /></svg></button>
      </div>
      <div class="flex h-3 items-center justify-between pr-1.5 pl-[135px] text-[#3c8fbf]">特征<svg class="h-[3px] w-[5px]"><use href="#down" /></svg></div>
    </div>

    <div class="w-[143px]">
      <div class="flex pl-1 [&>button]:flex [&>button]:flex-col [&>button]:items-center [&>button]:gap-[5px]">
        <button class="w-[38px]"><svg class="size-[26px]"><use href="#moveface" /></svg>移动面</button>
        <ul class="ml-0.5 flex w-[62px] flex-col gap-[5px] [&_button]:flex [&_button]:items-center [&_button]:gap-1 [&_button]:whitespace-nowrap">
          <li><button><svg class="size-[13px]"><use href="#offset" /></svg>偏置区域</button></li>
          <li><button><svg class="size-[13px]"><use href="#replace" /></svg>替换面</button></li>
          <li><button><svg class="size-[13px]"><use href="#delface" /></svg>删除面</button></li>
        </ul>
        <button class="w-8"><span class="-mb-1 grid h-7 w-8 place-items-center rounded border border-[#e6e6e6]"><svg class="size-[14px]"><use href="#sync" /></svg></span><span class="pt-0.5">更多</span><svg class="h-[3px] w-[5px]"><use href="#down" /></svg></button>
      </div>
      <div class="flex h-3 items-center justify-between pr-1.5 pl-[46px] text-[#3c8fbf]">同步建模<svg class="h-[3px] w-[5px]"><use href="#down" /></svg></div>
    </div>

    <div class="w-[35px]">
      <button class="flex flex-col items-center gap-[5px]"><svg class="size-[26px]"><use href="#surface" /></svg>曲面<svg class="h-[3px] w-[5px]"><use href="#down" /></svg></button>
    </div>

    <div class="w-[87px]">
      <div class="grid grid-cols-[19px_19px_19px_5px_19px] gap-y-3 pt-1.5 pl-1">
        <svg class="size-[13px] place-self-center"><use href="#g1" /></svg>
        <svg class="size-[13px] place-self-center"><use href="#g2" /></svg>
        <svg class="size-[13px] place-self-center"><use href="#g3" /></svg>
        <span class="h-3.5 w-px bg-[#ddd]"></span>
        <svg class="size-[13px] place-self-center"><use href="#g4" /></svg>
        <svg class="size-[13px] place-self-center"><use href="#bluecheck" /></svg>
        <svg class="size-[13px] place-self-center"><use href="#edgecheck" /></svg>
        <svg class="size-[13px] place-self-center"><use href="#blockcheck" /></svg>
        <span class="h-3.5 w-px bg-[#ddd]"></span>
        <svg class="size-[13px] place-self-center"><use href="#g8" /></svg>
      </div>
      <div class="flex h-3 items-center justify-between pr-1.5 pl-0.5 whitespace-nowrap text-[#3c8fbf]">标准化工具 - G...<svg class="h-[3px] w-[5px]"><use href="#down" /></svg></div>
    </div>

    <div class="w-[43px]">
      <div class="grid grid-cols-[19px_19px] gap-y-3 pt-1.5 pl-[3px]">
        <svg class="size-[13px] place-self-center"><use href="#gear1" /></svg>
        <svg class="size-[13px] place-self-center"><use href="#gear2" /></svg>
        <svg class="size-[13px] place-self-center"><use href="#gear3" /></svg>
      </div>
      <div class="flex h-3 items-center justify-between pr-1.5 pl-px whitespace-nowrap text-[#3c8fbf]">齿轮...<svg class="h-[3px] w-[5px]"><use href="#down" /></svg></div>
    </div>

    <div class="w-[48px]">
      <div class="grid grid-cols-[19px_5px_19px] gap-y-3 pt-1.5 pl-[3px]">
        <svg class="size-[13px] place-self-center"><use href="#spring1" /></svg>
        <span></span>
        <svg class="size-[13px] justify-self-start"><use href="#spring2" /></svg>
        <svg class="size-[13px] place-self-center"><use href="#spring3" /></svg>
        <span class="h-3.5 w-px bg-[#ddd]"></span>
        <svg class="size-[13px] place-self-center"><use href="#spring4" /></svg>
      </div>
      <div class="flex h-3 items-center justify-between pr-1.5 pl-1 whitespace-nowrap text-[#3c8fbf]">弹簧...<svg class="h-[3px] w-[5px]"><use href="#down" /></svg></div>
    </div>

    <div class="w-[43px]">
      <div class="grid grid-cols-[19px_19px] gap-y-3 pt-1.5 pl-[3px]">
        <svg class="size-[13px] place-self-center"><use href="#mill1" /></svg>
        <svg class="size-[13px] place-self-center"><use href="#mill2" /></svg>
        <svg class="size-[13px] place-self-center"><use href="#grid" /></svg>
        <svg class="size-[13px] place-self-center"><use href="#axes" /></svg>
      </div>
      <div class="flex h-3 items-center justify-between pr-1.5 pl-px whitespace-nowrap text-[#3c8fbf]">加工...<svg class="h-[3px] w-[5px]"><use href="#down" /></svg></div>
    </div>

    <div class="w-[82px]">
      <div class="grid grid-cols-4 gap-y-3 px-[3px] pt-1.5">
        <svg class="size-[13px] place-self-center"><use href="#tri" /></svg>
        <svg class="size-[13px] place-self-center"><use href="#sheet" /></svg>
        <svg class="size-[13px] place-self-center"><use href="#folderstar" /></svg>
        <svg class="size-[13px] place-self-center"><use href="#foldergear" /></svg>
        <svg class="size-[13px] place-self-center"><use href="#note" /></svg>
        <svg class="size-[13px] place-self-center"><use href="#brush" /></svg>
        <span class="col-span-2 ml-0.5 flex items-center border-l border-[#ddd] pl-1.5">
          <svg class="h-[14px] w-4" viewBox="0 0 18 16"><circle cx="6" cy="4" r="3" fill="#889" stroke="#333" /><circle cx="11" cy="4" r="3" fill="#889" stroke="#333" /><text x="0" y="15" font-size="7" font-weight="700" fill="#333">10<tspan fill="#c33">H7</tspan></text></svg>
        </span>
      </div>
      <div class="flex h-3 items-center justify-between pr-1.5 pl-1 whitespace-nowrap text-[#3c8fbf]">建模工具 - G...<svg class="h-[3px] w-[5px]"><use href="#down" /></svg></div>
    </div>

    <div class="w-6">
      <div class="flex flex-col items-center gap-3 pt-1.5">
        <svg class="size-[13px]"><use href="#cubes" /></svg>
        <svg class="size-[13px]"><use href="#cubes" /></svg>
      </div>
      <div class="flex h-3 items-center justify-between pr-1.5 whitespace-nowrap text-[#3c8fbf]">?..<svg class="h-[3px] w-[5px]"><use href="#down" /></svg></div>
    </div>

    <div class="w-14">
      <div class="grid grid-cols-[24px_1fr] gap-y-3 pt-1.5">
        <svg class="size-[13px] place-self-center"><use href="#dim" /></svg>
        <span class="flex h-[13px] items-center border-l border-[#ddd] pl-[3px] text-[6px]">1.00</span>
        <svg class="size-[13px] place-self-center"><use href="#dim2" /></svg>
        <svg class="size-[13px]"><use href="#dim3" /></svg>
      </div>
    </div>
  </section>

  <!-- selection bar -->
  <section class="flex h-[27px] shrink-0 items-center overflow-hidden border-b-2 border-[#9fa3a5] [&>svg]:shrink-0">
    <button class="ml-2 flex shrink-0 items-center gap-[3px] text-[9px]"><svg class="size-[14px]"><use href="#menu" /></svg><span>菜单(<u>M</u>)</span><svg class="h-[3px] w-[5px]"><use href="#down" /></svg></button>
    <span class="ml-1.5 h-5 w-px shrink-0 bg-[#ddd]"></span>
    <label class="relative ml-2.5 block w-[111px] shrink-0">
      <select aria-label="类型过滤器" class="block h-[17px] w-full appearance-none border border-[#aaa] bg-white pl-0.5 text-[9px]"><option>边</option></select>
      <svg class="absolute top-[7px] right-1 h-1 w-1.5"><use href="#down" /></svg>
    </label>
    <label class="relative ml-2 block w-[116px] shrink-0">
      <select aria-label="选择范围" class="block h-[17px] w-full appearance-none border border-[#aaa] bg-white pl-0.5 text-[9px]"><option>仅在工作部件内</option></select>
      <svg class="absolute top-[7px] right-1 h-1 w-1.5"><use href="#down" /></svg>
    </label>
    <svg class="ml-1.5 size-[14px]"><use href="#graysel" /></svg>
    <svg class="ml-2 size-[14px]"><use href="#grayfilter" /></svg>
    <svg class="ml-1 size-[14px]"><use href="#pick" /></svg>
    <svg class="ml-1.5 h-[3px] w-[5px]"><use href="#down" /></svg>
    <svg class="ml-2 size-[14px]"><use href="#rotpick" /></svg>
    <svg class="ml-1.5 size-[14px]"><use href="#grayfilter" /></svg>
    <svg class="ml-1.5 size-[14px]"><use href="#dashrect" /></svg>
    <svg class="ml-1.5 h-[3px] w-[5px]"><use href="#down" /></svg>
    <svg class="ml-1.5 size-[14px]"><use href="#disc" /></svg>
    <svg class="ml-1.5 size-[14px]"><use href="#cube" /></svg>
    <label class="relative ml-1.5 block w-[117px] shrink-0">
      <select aria-label="曲线规则" class="block h-[17px] w-full appearance-none border border-[#aaa] bg-white pl-0.5 text-[9px]"><option>相切曲线</option></select>
      <svg class="absolute top-[7px] right-1 h-1 w-1.5"><use href="#down" /></svg>
    </label>
    <div class="ml-2 flex shrink-0 gap-[7px]">
      <svg class="size-[14px]"><use href="#crosspts" /></svg>
      <svg class="h-[14px] w-3"><use href="#arrowr" /></svg>
      <svg class="size-[14px]"><use href="#s1" /></svg>
      <svg class="size-[14px]"><use href="#s2" /></svg>
      <svg class="size-[14px]"><use href="#s3" /></svg>
      <svg class="size-[14px]"><use href="#s4" /></svg>
      <svg class="size-[14px]"><use href="#s5" /></svg>
      <svg class="size-[14px]"><use href="#s6" /></svg>
      <svg class="size-[14px]"><use href="#s7" /></svg>
      <svg class="size-[14px]"><use href="#s8" /></svg>
      <svg class="size-[14px]"><use href="#s9" /></svg>
      <svg class="size-[14px]"><use href="#s2" /></svg>
      <svg class="size-[14px]"><use href="#s11" /></svg>
      <svg class="size-[14px]"><use href="#s12" /></svg>
    </div>
    <span class="ml-2 h-5 w-px shrink-0 bg-[#ddd]"></span>
    <div class="ml-2.5 flex shrink-0 gap-1.5">
      <svg class="size-[14px]"><use href="#fit" /></svg>
      <svg class="size-[14px]"><use href="#pan" /></svg>
      <svg class="size-[14px]"><use href="#rot" /></svg>
      <svg class="size-[14px]"><use href="#layout" /></svg>
    </div>
  </section>

  <div class="flex min-h-0 flex-1">
    <!-- resource bar -->
    <aside class="flex w-[27px] shrink-0 flex-col items-center overflow-hidden border-r border-[#c4c4c4] bg-[#dadada] [&>button]:grid [&>button]:w-full [&>button]:shrink-0 [&>button]:place-items-center">
      <button class="h-5" aria-label="设置"><svg class="size-3 text-[#333]"><use href="#cog" /></svg></button>
      <button class="mt-3.5 h-9" aria-label="装配导航器"><svg class="size-[19px]"><use href="#n1" /></svg></button>
      <button class="h-[34px]" aria-label="约束导航器"><svg class="size-[19px]"><use href="#n2" /></svg></button>
      <button class="ml-0.5 h-[37px] border border-r-0 border-[#bbb] bg-white" aria-label="部件导航器"><svg class="size-[19px]"><use href="#n3" /></svg></button>
      <button class="h-8" aria-label="重用库"><svg class="size-[19px]"><use href="#n4" /></svg></button>
      <button class="h-9" aria-label="HD3D"><svg class="size-[19px]"><use href="#n5" /></svg></button>
      <button class="mt-1.5 h-11" aria-label="信息"><svg class="size-5"><use href="#n6" /></svg></button>
      <button class="h-11" aria-label="浏览器"><svg class="size-[17px]"><use href="#n7" /></svg></button>
      <button class="h-11" aria-label="历史"><svg class="size-5"><use href="#n8" /></svg></button>
      <button class="h-7" aria-label="材料"><svg class="size-[19px]"><use href="#n9" /></svg></button>
      <button class="h-10" aria-label="向导"><svg class="size-[19px]"><use href="#n10" /></svg></button>
      <button class="h-6" aria-label="角色"><svg class="size-[17px]"><use href="#n11" /></svg></button>
    </aside>

    <!-- part navigator -->
    <section class="flex w-[213px] shrink-0 flex-col overflow-hidden pr-2 pl-1.5">
      <div class="flex h-[23px] shrink-0 items-center justify-between pr-1 pl-0.5">
        <h2>部件导航器</h2>
        <span class="h-[9px] w-[11px] border border-t-2 border-[#222]"></span>
      </div>
      <div class="min-h-0 flex-1 overflow-hidden border-x border-t border-[#e2e2e2]">
        <table class="h-[417px] w-full table-fixed border-collapse">
          <thead class="bg-[#f0f0f0]">
            <tr class="h-[18px] border-b border-[#ddd]">
              <th class="w-[165px] border-r border-[#ddd] pl-1 text-left font-normal"><span class="inline-flex items-center gap-4">名称<svg class="h-1 w-2" viewBox="0 0 8 4"><path d="M0 4h8L4 0z" fill="#111" /></svg></span></th>
              <th class="pl-1 text-left font-normal">最新</th>
            </tr>
          </thead>
          <tbody id="tree"></tbody>
        </table>
      </div>
    </section>

    <!-- graphics window -->
    <main class="relative min-w-0 flex-1 overflow-hidden border-l border-[#8f9293] bg-linear-to-b from-[#b3b4b6] to-[#e0e1e2]">
      <svg class="absolute top-0 left-0 h-full w-full" viewBox="241 150 759 428" preserveAspectRatio="xMidYMid meet">
        <!-- base plate -->
        <path d="M341 464L405 529 986 443V452L405 538 341 472z" fill="#cdb79a" />
        <path d="M341 463L922 376 986 443 405 529z" fill="#dfd3a0" />
        <!-- countersunk holes -->
        <g fill="#dfcfa0" stroke="#a8a8a0" stroke-width=".9">
          <ellipse cx="388" cy="476" rx="19" ry="9.500" />
          <ellipse cx="419" cy="507" rx="19" ry="9.500" />
          <ellipse cx="939" cy="429" rx="19" ry="9.500" />
          <ellipse cx="912" cy="399" rx="16" ry="8.500" />
        </g>
        <g fill="#e3c49c" opacity=".5">
          <path d="M370 476a18 9 0 0 0 10 8l4-6-6-9zM405 472a18 9 0 0 1-9 12l-4-6 6-8z" />
          <path d="M401 507a18 9 0 0 0 10 8l4-6-6-9zM436 503a18 9 0 0 1-9 12l-4-6 6-8z" />
          <path d="M921 429a18 9 0 0 0 10 8l4-6-6-9zM956 425a18 9 0 0 1-9 12l-4-6 6-8z" />
        </g>
        <g fill="#d6d8da" stroke="#9a9a98" stroke-width=".8">
          <path d="M379 483q8-5 16 1-8 4-16-1z" />
          <path d="M410 514q8-5 16 1-8 4-16-1z" />
          <path d="M930 435q8-4 16 2-8 4-16-2z" />
        </g>
        <path d="M342 471L920 384 980 447" fill="none" stroke="#6b6130" stroke-width="3.200" />
        <path d="M342 471L920 384 980 447" fill="none" stroke="#fba51c" stroke-width="2" />
        <path d="M342 465L922 378.500 983 443" fill="none" stroke="#4f4a30" stroke-width="1" />
        <path d="M341 463L922 376 986 443 405 529z" fill="none" stroke="#fb9a3f" stroke-width="2.200" stroke-linejoin="round" />
        <path d="M344 464L406 526M405 531.500L985 445.500M404 536L984 450" fill="none" stroke="#57503a" stroke-width="1" />
        <path d="M340 463V472L405 539 984 453 985 443" fill="none" stroke="#fb9a3f" stroke-width="2.200" stroke-linejoin="round" />
        <path d="M612 487L662 491" stroke="#a89a5c" stroke-width=".8" />

        <!-- handle -->
        <g stroke="#989a9e" stroke-width="1.200" stroke-linejoin="round">
          <path d="M869 350L882 348 872 437 845 409 853 373z" fill="#bfa284" fill-opacity=".72" />
          <path d="M868 318L925 310 910 431 872 437 882 348 869 350z" fill="#c0a488" fill-opacity=".76" />
          <path d="M443 366L458 379 444 501 418 474z" fill="#bfa284" fill-opacity=".66" />
          <path d="M458 379L518 370 513 403 493 405 483 495 444 501z" fill="#c0a488" fill-opacity=".68" />
          <path d="M498 348L845 296 851 302 512 354z" fill="#d4c896" />
          <path d="M443 366L445 363 910 294 925 310 458 379z" fill="#d5ca96" />
          <path d="M517 371L523 377 516 423 498 405 513 403z" fill="#c6b094" />
          <path d="M517 371L868 318 872 324 523 377z" fill="#d2c790" />
          <path d="M523 377L872 324 865 371 516 423z" fill="#c4b096" />
        </g>

        <!-- drag handle -->
        <path d="M660 482L670 487 670 492 663 493z" fill="#1f94e8" />
        <path d="M663 493L671 492 665 505z" fill="#0b5c9c" />
        <path d="M660 482L670 487 665 490z" fill="#3aaef5" />

        <!-- watermark -->
        <g fill="#fff" fill-opacity=".8">
          <g stroke="#fff" stroke-opacity=".6" stroke-width=".8">
            <text x="766" y="526" font-family="Open Sans" font-weight="700" font-size="38">Bai</text>
            <text x="882" y="524" font-family="Noto Sans CJK SC" font-weight="700" font-size="30">经验</text>
          </g>
          <ellipse cx="834" cy="493" rx="6" ry="8" />
          <ellipse cx="847" cy="481" rx="6" ry="8" />
          <ellipse cx="863" cy="481" rx="6" ry="8" transform="rotate(12 863 481)" />
          <ellipse cx="873" cy="496" rx="6" ry="8" transform="rotate(15 873 496)" />
          <path d="M853 494c6 0 9 6 14 11 5 4 9 9 8 14-1 7-7 9-13 8-6-1-12-1-18 0-7 1-12-2-12-9 0-5 4-9 8-13 5-5 7-11 13-11z" />
          <text x="769" y="550" font-family="Open Sans" font-size="20">jingyan.baidu.com</text>
        </g>
        <text x="840" y="523" font-family="Open Sans" font-weight="600" font-size="22" fill="#c6c8ca">du</text>
      </svg>

      <!-- edge blend dialog -->
      <form class="absolute top-0 left-0 w-[272px] border-r border-b border-[#b5b5b5] bg-[#e8e8e8] pb-2" onsubmit="return false">
        <div class="flex h-5 items-center bg-[#5d8882] px-1.5 text-[11px] text-[#e6efed]">
          <svg class="size-3 text-white"><use href="#cog" /></svg>
          <h2 class="ml-2 flex-1">边倒圆</h2>
          <button type="button" aria-label="重置"><svg class="size-3" viewBox="0 0 12 12"><path d="M2.500 3a4.500 4.500 0 1 0 6 0M5 3.500h4V.5" fill="none" stroke="#fff" stroke-width="1.500" /></svg></button>
          <button type="button" class="ml-1.5" aria-label="关闭"><svg class="size-3" viewBox="0 0 12 12"><path d="M1.500 1.500l9 9M10.500 1.500l-9 9" stroke="#fff" stroke-width="2" /></svg></button>
        </div>
        <div class="ml-[5px] mr-1 mt-[3px] flex flex-col gap-px border-b border-[#ccc] bg-white pr-2 pb-1.5 pl-[7px]">
          <div class="flex h-[22px] items-center justify-between text-[12px] text-[#3c93c4]">
            <h3 class="-ml-px">要倒圆的边</h3>
            <svg class="-mr-1 h-2 w-2.5" viewBox="0 0 10 8"><path d="M1 7l4-5.500L9 7" fill="none" stroke="#3587bb" stroke-width="1.600" /></svg>
          </div>
          <div class="flex h-6 items-center justify-between">
            <label for="continuity">混合面连续性</label>
            <span class="relative block w-[117px]">
              <svg class="absolute top-1 left-1 size-[13px]"><use href="#g1blend" /></svg>
              <select id="continuity" class="block h-[21px] w-full appearance-none border border-[#aaa] pl-5 text-[10px]"><option>G1（相切）</option></select>
              <svg class="absolute top-[9px] right-1 h-1 w-1.5"><use href="#down" /></svg>
            </span>
          </div>
          <div class="flex h-[26px] gap-0.5">
            <div class="flex flex-1 items-center gap-1 bg-[#fdd66e] pl-0.5"><svg class="size-2.5"><use href="#tick" /></svg>选择边 (16)</div>
            <button type="button" aria-label="选择边" class="grid w-[26px] place-items-center border border-[#f5d98a] bg-[#fdeab0]"><svg class="size-5"><use href="#edgecube" /></svg></button>
          </div>
          <div class="flex h-[22px] items-center justify-between">
            <label for="shape">形状</label>
            <span class="relative block w-[117px]">
              <svg class="absolute top-1 left-1 size-[13px]"><use href="#circblend" /></svg>
              <select id="shape" class="block h-[21px] w-full appearance-none border border-[#aaa] pl-5 text-[10px]"><option>圆形</option></select>
              <svg class="absolute top-[9px] right-1 h-1 w-1.5"><use href="#down" /></svg>
            </span>
          </div>
          <div class="flex h-[22px] items-center justify-between">
            <label for="radius">半径 1</label>
            <span class="flex h-5 w-[117px] items-center border border-[#aaa] pr-1 pl-[3px]">
              <input id="radius" type="text" value="0.5" class="h-3.5 w-4 bg-[#3390f5] p-0 text-[10px] leading-none text-white outline-none" />
              <span class="ml-auto pr-4">mm</span>
              <svg class="h-1 w-1.5"><use href="#down" /></svg>
            </span>
          </div>
          <div class="flex h-[22px] items-center justify-between">
            <span>添加新集</span>
            <button type="button" aria-label="添加新集" class="grid size-5 place-items-center border border-[#7fb4d4] bg-[#a3d0ea]"><svg class="size-[14px]"><use href="#addset" /></svg></button>
          </div>
        </div>
        <div class="mt-3 flex justify-end gap-1 pr-[11px] [&>button]:h-[21px] [&>button]:w-[45px] [&>button]:border [&>button]:border-[#b3b6ba] [&>button]:bg-[#c9ccd1]">
          <button type="submit">&lt; 确定 &gt;</button>
          <button type="button">应用</button>
          <button type="button">取消</button>
        </div>
      </form>

      <!-- on-screen radius input -->
      <div class="absolute top-[324px] left-[270px] flex h-[25px] w-[101px] items-center border border-[#a9adb3] bg-[#f1f5f6] pr-0.5 pl-0.5">
        <svg class="h-5 w-1.5" viewBox="0 0 6 20"><path d="M1.500 1v18M4.500 1v18" stroke="#999" stroke-dasharray="2 2" stroke-width="1.500" /></svg>
        <label for="radius2" class="ml-auto pr-0.5">半径 1</label>
        <span class="flex h-[19px] w-[51px] items-center border border-[#999] bg-white pr-0.5">
          <input id="radius2" type="text" value="0.5" class="w-full min-w-0 flex-1 bg-transparent pl-[3px] text-[10px] outline-none" />
          <svg class="h-1 w-1.5 shrink-0"><use href="#down" /></svg>
        </span>
      </div>
    </main>
  </div>

  <!-- step highlights -->
  <div class="pointer-events-none absolute top-[34px] left-[320px] h-[98px] w-[54px] border-4 border-[#ee1c25]"></div>
  <div class="pointer-events-none absolute top-[137px] left-[230px] h-10 w-[90px] border-4 border-[#ee1c25]"></div>
  <div class="pointer-events-none absolute top-[241px] left-[369px] h-[55px] w-[71px] border-4 border-[#ee1c25]"></div>
  <div class="pointer-events-none absolute top-[405px] left-[46px] h-[28px] w-[109px] border-4 border-[#ee1c25]"></div>

  <script>
    const nodes = [
      { icon: 't-clock', text: '历史记录模式' },
      { icon: 't-view', text: '模型视图', expander: '+' },
      { icon: 't-cam', text: '摄像机', expander: '+', tick: true },
      { icon: 't-expr', text: '用户表达式' },
      { icon: 't-folder', text: '模型历史记录', expander: '−' },
      { icon: 'axes', text: '基准坐标系 (0)', child: true, dim: true },
      { icon: 'cube', text: '块 (1)', child: true },
      { icon: 't-sink', text: '埋头孔 (2)', child: true },
      { icon: 't-plane', text: '基准平面 (3)', child: true, dim: true },
      { icon: 't-plane', text: '基准平面 (4)', child: true, dim: true },
      { icon: 'extrude', text: '拉伸 (5)', child: true },
      { icon: 'draft', text: '拔模 (6)', child: true },
      { icon: 'extrude', text: '拉伸 (8)', child: true },
      { icon: 't-round', text: '边倒圆 (9)', child: true, bold: true }
    ];

    const branch = '<span class="w-2 self-stretch border-l border-dotted border-[#aaa]"><span class="block h-1/2 border-b border-dotted border-[#aaa]"></span></span>';

    function nameCell(n) {
      const icon = `<svg class="size-[13px] shrink-0"><use href="#${n.icon}" /></svg>`;
      const tick = '<svg class="size-2.5 shrink-0"><use href="#tick" /></svg>';
      if (n.child) {
        const color = n.dim ? 'text-[#a3a3a3]' : n.bold ? 'font-bold' : '';
        return `<span class="w-[23px]"></span>${branch}
          <label class="flex items-center gap-[3px] whitespace-nowrap ${color}">
            <span class="relative ml-px size-[11px]">
              <input type="checkbox" checked class="block size-[11px] appearance-none border border-[#222] bg-white" />
              <svg class="absolute top-0 left-0 size-[11px]"><use href="#tick" /></svg>
            </span>
            <span class="-ml-0.5 flex items-center gap-[3px]">${icon}${n.text}</span>
          </label>`;
      }
      const box = n.expander
        ? `<button class="ml-[3px] mr-[5px] grid size-2 place-items-center border border-[#ccc] bg-white text-[8px] leading-none font-bold">${n.expander}</button>`
        : `<span class="w-[7px]"></span>${branch}<span class="w-px"></span>`;
      return box + (n.tick ? `<span class="ml-0.5 mr-0.5 flex">${tick}</span>` : '') + icon + `<span class="pl-[2px]">${n.text}</span>`;
    }

    let rows = '';
    for (let i = 0; i < 24; i++) {
      const n = nodes[i];
      const shade = i % 2 ? 'bg-[#f8f8f8]' : 'bg-white';
      rows += `<tr class="${shade} border-b border-[#ececec]">
        <td class="border-r border-[#e6e6e6] p-0"><div class="flex h-[15px] items-center whitespace-nowrap">${n ? nameCell(n) : ''}</div></td>
        <td class="p-0 pl-[5px]">${n && n.child ? '<svg class="size-2.5"><use href="#tick" /></svg>' : ''}</td>
      </tr>`;
    }
    document.getElementById('tree').innerHTML = rows;
  </script>
</body>

</html>
